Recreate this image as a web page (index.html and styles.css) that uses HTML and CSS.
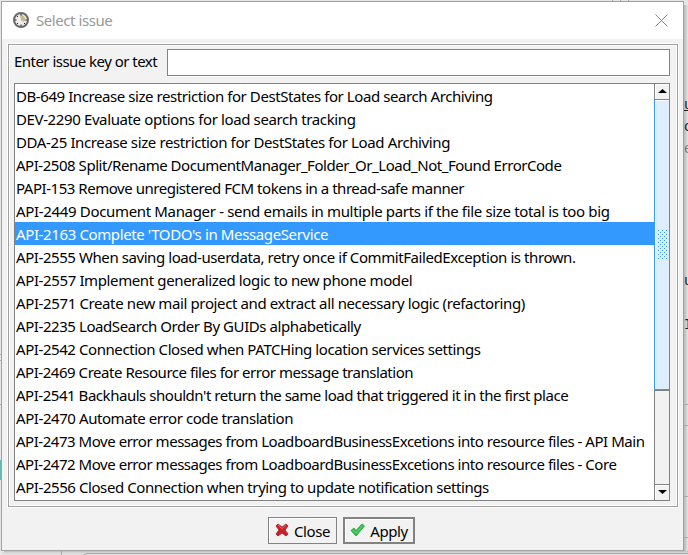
FILE: index.html
```
<!DOCTYPE html>
<html lang="en">
<head>
<meta charset="utf-8">
<title>Select issue</title>
<link rel="stylesheet" href="styles.css">
</head>
<body>
<svg class="backdrop" width="688" height="555">
  <defs><linearGradient id="fade" x2="1"><stop offset="0" stop-color="#aaa"/><stop offset="1" stop-color="#e6e6e6"/></linearGradient></defs>
  <path fill="#e6e6e6" d="M0 0h688v555H0z"/>
  <path fill="url(#fade)" d="M683 5h5v546h-5z"/>
  <path fill="#c4c4c4" d="M4 551h684v1H4z"/><path fill="#d4d4d4" d="M3 552h685v1H3z"/><path fill="#dedede" d="M2 553h686v2H2z"/>
  <path stroke="#aaa" d="M612.5 0v2M620.5 0v2M628.5 0v2M0 354.5h2M0 360.5h2M0 404.5h2M684 404.5h4M684 425.5h4M684 496.5h4M684 537.5h4M61.5 551v4M688 553.5H86l-3 2" fill="none"/>
  <path fill="#66b8b5" d="M0 460h2v20H0z"/>
  <path fill="#222" d="M684 110h4v1h-4z"/>
  <g class="code"><text x="684" y="109">u</text><text x="684" y="131">c</text><text x="684" y="153" opacity=".5">e</text><text x="684" y="285">u</text><text x="684" y="329">I</text></g>
</svg>
<section class="dialog">
  <header class="titlebar">
    <svg class="clock" width="18" height="18" viewBox="0 0 18 18"><circle cx="9" cy="9" r="7" fill="#eeeeec" stroke="#686868" stroke-width="2"/><path d="M9 9L8 3.500a6 6 0 0 1 5.500 7z" fill="#c8b68a"/><path d="M8.500 3h1v1.500h-1zM8.500 13.500h1V15h-1zM3 8.500h1.500v1H3zM13.500 8.500H15v1h-1.500zM5 5h1v1H5zM5 12h1v1H5zM12 12h1v1h-1z" fill="#222"/><path d="M9 9l3 2" fill="none" stroke="#bbb"/></svg>
    <h1>Select issue</h1>
    <svg class="dismiss" width="13" height="13" viewBox="0 0 13 13"><path d="M.5.5l12 12M12.500.5l-12 12" stroke="#858585" fill="none"/></svg>
  </header>
  <main class="panel">
    <div class="search"><label for="query">Enter issue key or text</label><input id="query" type="text"></div>
    <div class="list">
      <ul>
        <li class="snug">DB-649 Increase size restriction for DestStates for Load search Archiving</li>
        <li>DEV-2290 Evaluate options for load search tracking</li>
        <li>DDA-25 Increase size restriction for DestStates for Load Archiving</li>
        <li class="tight">API-2508 Split/Rename DocumentManager_Folder_Or_Load_Not_Found ErrorCode</li>
        <li class="tight">PAPI-153 Remove unregistered FCM tokens in a thread-safe manner</li>
        <li class="loose">API-2449 Document Manager - send emails in multiple parts if the file size total is too big</li>
        <li class="selected">API-2163 Complete 'TODO's in MessageService</li>
        <li class="snug">API-2555 When saving load-userdata, retry once if CommitFailedException is thrown.</li>
        <li>API-2557 Implement generalized logic to new phone model</li>
        <li>API-2571 Create new mail project and extract all necessary logic (refactoring)</li>
        <li class="snug">API-2235 LoadSearch Order By GUIDs alphabetically</li>
        <li class="snug">API-2542 Connection Closed when PATCHing location services settings</li>
        <li class="tight">API-2469 Create Resource files for error message translation</li>
        <li class="tight">API-2541 Backhauls shouldn't return the same load that triggered it in the first place</li>
        <li class="snug">API-2470 Automate error code translation</li>
        <li class="tight">API-2473 Move error messages from LoadboardBusinessExcetions into resource files - API Main</li>
        <li class="tight">API-2472 Move error messages from LoadboardBusinessExcetions into resource files - Core</li>
        <li class="snug">API-2556 Closed Connection when trying to update notification settings</li>
      </ul>
      <div class="scrollbar">
        <div class="arrow up"><svg width="9" height="5" viewBox="0 0 9 5"><path d="M4.500 0L9 4H0z"/></svg></div>
        <div class="thumb"><div class="grip"></div></div>
        <div class="track"></div>
        <div class="arrow down"><svg width="9" height="5" viewBox="0 0 9 5"><path d="M0 0h9L4.500 4z"/></svg></div>
      </div>
    </div>
  </main>
  <footer>
    <button class="close"><svg width="14" height="14" viewBox="0 0 14 14"><path d="M1 3l2-2 4 3 4-3 2 2-3 4 3 4-2 2-4-3-4 3-2-2 3-4z" fill="#cb2027" stroke="#9e1b1f" stroke-width=".8"/><path d="M3 2l4 3.500L11 2" fill="none" stroke="#ee6b6b"/></svg>Close</button>
    <button class="apply"><svg width="15" height="14" viewBox="0 0 15 14"><path d="M1 7.500l3-2.500 2 2.500L12 1l2.500 2L6 13z" fill="#2fc24c" stroke="#239a38" stroke-width=".8"/><path d="M2.500 7l3.500 3 6.500-7" fill="none" stroke="#65dc78"/></svg>Apply</button>
  </footer>
</section>
</body>
</html>
```
FILE: styles.css
```
* { box-sizing: border-box; }
body { margin: 0; width: 688px; height: 555px; overflow: hidden; padding: 1px 0 0 1px; font: 15px "Noto Sans", sans-serif; letter-spacing: -.38px; color: #000; }
.backdrop { position: absolute; left: 0; top: 0; z-index: -1; }
.code { font: 14px "Liberation Mono", monospace; fill: #222; }
.dialog { width: 683px; height: 550px; border: 1px solid #a2a2a2; background: #f2f2f2; display: flex; flex-direction: column; }
.titlebar { height: 37px; background: #fff; display: flex; align-items: center; padding: 0 15px 0 10px; }
.clock { margin-top: -1px; }
.titlebar h1 { font: inherit; color: #999; margin: -2px auto 0 6px; letter-spacing: -.43px; }
.dismiss { margin-top: -1px; }
.panel { width: 670px; height: 463px; margin: 5px 0 0 6px; border: 1px solid #a0a0a0; outline: 1px solid #fff; box-shadow: inset 0 0 0 1px #fff; padding: 4px 7px 0 5px; }
.search { display: flex; height: 27px; }
.search label { width: 153px; line-height: 24px; white-space: nowrap; letter-spacing: -.53px; }
.search input { flex: 1; border: 1px solid #828282; padding: 2px 4px; background: #fff; font: inherit; outline: none; box-shadow: 0 1px #fff; }
.list { display: flex; height: 418px; margin-top: 7px; border: 1px solid #828282; background: #fff; }
ul { flex: 1; margin: 0; padding: 0; list-style: none; overflow: hidden; }
li { height: 23px; line-height: 25px; padding-left: 1px; white-space: nowrap; }
.loose { letter-spacing: -.335px; }
.snug { letter-spacing: -.425px; }
.tight { letter-spacing: -.465px; }
.selected { background: #3399ff; color: #fff; }
.scrollbar { width: 15px; display: flex; flex-direction: column; }
.arrow { height: 16px; display: flex; align-items: center; justify-content: center; border-left: 1px solid #828282; background: #f2f2f2; box-shadow: inset 1px 1px #fff; }
.up { height: 15px; }
.down { border-top: 1px solid #828282; }
.thumb { height: 291px; border: solid #3399ff; border-width: 1px 0 1px 1px; background: #deeeff; box-shadow: inset 1px 1px #fff; padding: 130px 0 0 3px; }
.grip { width: 10px; height: 30px; background: conic-gradient(#3399ff 0 0) 0 0 / 0 0, linear-gradient(#3399ff, #3399ff) 0 0; -webkit-mask: linear-gradient(#000 0 0) 0 0 / 4px 4px; mask: conic-gradient(from 270deg at 1px 1px, #000 90deg, transparent 0) 0 0 / 4px 4px, conic-gradient(from 270deg at 1px 1px, #000 90deg, transparent 0) 2px 2px / 4px 4px; }
.track { flex: 1; border-left: 1px solid #828282; border-top: 1px solid #828282; background: #f2f2f2; }
footer { display: flex; justify-content: center; gap: 6px; padding: 10px 2px 0 0; }
button { height: 27px; padding: 1px 0 0; border: 1px solid #828282; background: #f2f2f2; box-shadow: inset 1px 1px #fff; font: inherit; letter-spacing: inherit; color: inherit; display: flex; align-items: center; justify-content: center; gap: 5px; }
button svg { margin-top: -2px; }
.close { width: 69px; }
.apply { width: 72px; border-width: 2px; padding-top: 0; }
```
